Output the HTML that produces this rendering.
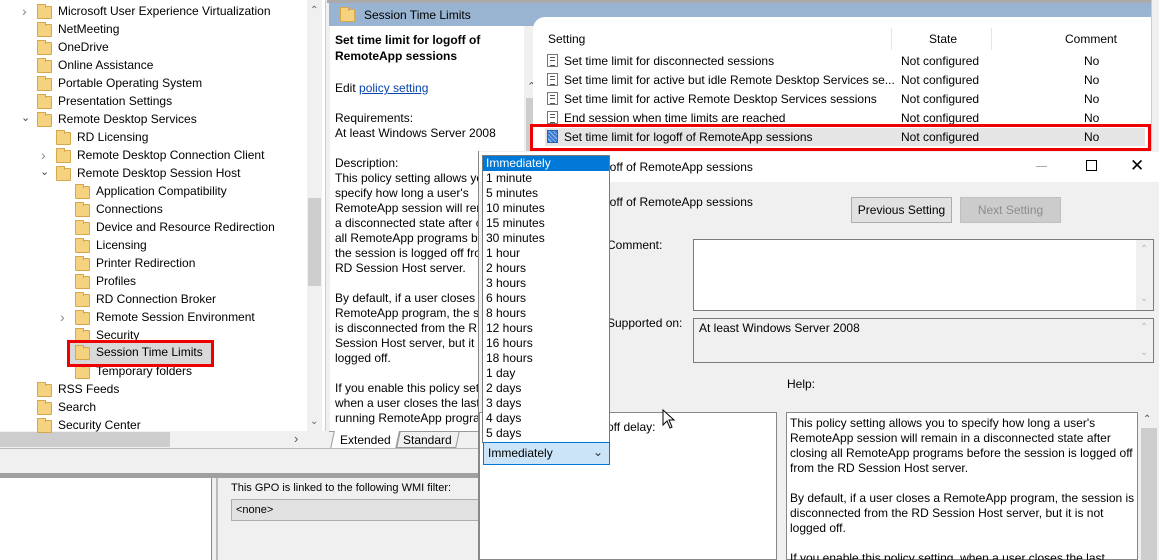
<!DOCTYPE html>
<html><head><meta charset="utf-8"><style>
*{box-sizing:border-box;margin:0;padding:0}
html,body{width:1159px;height:560px;overflow:hidden}
body{position:relative;background:#f0f0f0;font-family:"Liberation Sans",sans-serif;font-size:12px;color:#000}
.a{position:absolute;white-space:nowrap}
.fold{position:absolute;width:15px;height:13px;background:#f5d27f;border:1px solid #d7a84a;border-radius:1px}
.fold:before{content:"";position:absolute;left:-1px;top:-3px;width:7px;height:3px;background:#f5d27f;border:1px solid #d7a84a;border-bottom:none}
.chev{position:absolute;color:#888;font-size:11px}
.ico{position:absolute;width:11px;height:13px;border:1px solid #777;background:#fff}
.ico:after{content:"";position:absolute;left:2px;top:2px;width:5px;height:7px;border-top:1px solid #555;border-bottom:1px solid #555;background:linear-gradient(#fff 2px,#555 2px,#555 3px,#fff 3px)}
.dl div{height:15px;line-height:15px;padding-left:3px}
</style></head><body>
<!-- tree pane -->
<div class="a" style="left:0;top:0;width:326px;height:431px;background:#fff;border-right:1px solid #ccc"></div>
<div class="a" style="left:307px;top:0;width:15px;height:431px;background:#f0f0f0"></div>
<div class="a" style="left:308px;top:198px;width:13px;height:88px;background:#cdcdcd"></div>
<div class="a" style="left:310px;top:5px;color:#666;font-size:10px">&#8963;</div>
<div class="a" style="left:310px;top:416px;color:#666;font-size:10px">&#8964;</div>
<div class="a" style="left:0;top:431px;width:326px;height:17px;background:#f0f0f0"></div>
<div class="a" style="left:0;top:432px;width:170px;height:15px;background:#cdcdcd"></div>
<div class="a" style="left:294px;top:431px;color:#555;font-size:13px">&#8250;</div>

<div id="tree"></div>
<div class="a" style="left:67px;top:340px;width:147px;height:27px;border:3px solid #e00;background:#d9d9d9"></div>
<div class="fold" style="left:75px;top:347px"></div>
<div class="a" style="left:96px;top:345px">Session Time Limits</div>

<!-- middle/header -->
<div class="a" style="left:327px;top:0;width:832px;height:3px;background:#aaa"></div>
<div class="a" style="left:329px;top:3px;width:822px;height:23px;background:#99b4d1"></div>
<div class="fold" style="left:340px;top:9px"></div>
<div class="a" style="left:364px;top:8px;font-size:12px">Session Time Limits</div>
<div class="a" style="left:1151px;top:0;width:8px;height:150px;background:#f0f0f0;border-left:1px solid #ccc"></div>
<div class="a" style="left:330px;top:26px;width:195px;height:405px;background:#fff"></div>
<div class="a" style="left:524px;top:26px;width:16px;height:405px;background:#f0f0f0"></div>
<div class="a" style="left:526px;top:98px;width:12px;height:300px;background:#cdcdcd"></div>
<div class="a" style="left:527px;top:80px;color:#555;font-size:11px">&#8963;</div>
<div class="a" style="left:335px;top:32px;font-weight:bold;line-height:16px">Set time limit for logoff of<br>RemoteApp sessions</div>
<div class="a" style="left:335px;top:81px">Edit <span style="color:#0645ad;text-decoration:underline">policy setting </span></div>
<div class="a" style="left:335px;top:111px;line-height:15px">Requirements:<br>At least Windows Server 2008</div>
<div class="a" style="left:335px;top:156px;line-height:15px">Description:<br>This policy setting allows you to<br>specify how long a user's<br>RemoteApp session will remain in<br>a disconnected state after closing<br>all RemoteApp programs before<br>the session is logged off from the<br>RD Session Host server.<br><br>By default, if a user closes a<br>RemoteApp program, the session<br>is disconnected from the RD<br>Session Host server, but it is not<br>logged off.<br><br>If you enable this policy setting,<br>when a user closes the last<br>running RemoteApp program</div>
<div class="a" style="left:329px;top:431px;width:150px;height:17px;background:#f0f0f0;border-top:1px solid #999"></div>
<div class="a" style="left:332px;top:431px;width:66px;height:18px;background:#fff;border:1px solid #999;border-top:none;transform:skewX(-12deg)"></div>
<div class="a" style="left:340px;top:433px">Extended</div>
<div class="a" style="left:398px;top:431px;width:60px;height:17px;border:1px solid #999;border-top:none;transform:skewX(-12deg)"></div>
<div class="a" style="left:403px;top:433px">Standard</div>

<!-- bottom -->
<div class="a" style="left:0;top:448px;width:478px;height:25px;background:#f0f0f0;border-top:1px solid #bbb"></div>
<div class="a" style="left:0;top:473px;width:478px;height:5px;background:#a0a0a0"></div>
<div class="a" style="left:0;top:478px;width:212px;height:82px;background:#fff;border-right:1px solid #888"></div>
<div class="a" style="left:216px;top:478px;width:2px;height:82px;background:#bbb"></div>
<div class="a" style="left:231px;top:482px;font-size:11px">This GPO is linked to the following WMI filter:</div>
<div class="a" style="left:231px;top:499px;width:250px;height:22px;background:#e1e1e1;border:1px solid #adadad;padding:4px 4px;font-size:11px">&lt;none&gt;</div>

<!-- settings list -->
<div class="a" style="left:533px;top:17px;width:618px;height:133px;background:#fff;border-radius:12px 0 0 0"></div>
<div class="a" style="left:548px;top:32px">Setting</div>
<div class="a" style="left:891px;top:28px;width:1px;height:22px;background:#e5e5e5"></div>
<div class="a" style="left:991px;top:28px;width:1px;height:22px;background:#e5e5e5"></div>
<div class="a" style="left:929px;top:32px">State</div>
<div class="a" style="left:1065px;top:32px">Comment</div>
<div id="rows"></div>
<div class="a" style="left:530px;top:124px;width:621px;height:27px;border:3px solid #e00"></div>

<!-- dialog -->
<div class="a" style="left:478px;top:151px;width:681px;height:409px;background:#f0f0f0;border-left:1px solid #888"></div>
<div class="a" style="left:479px;top:152px;width:680px;height:30px;background:#fff"></div>
<div class="a" style="left:603px;top:160px">goff of RemoteApp sessions</div>
<div class="a" style="left:1036px;top:166px;width:11px;height:1px;background:#aaa"></div>
<div class="a" style="left:1086px;top:160px;width:11px;height:11px;border:1px solid #000"></div>
<div class="a" style="left:1130px;top:156px;font-size:17px;font-weight:100">&#10005;</div>
<div class="a" style="left:603px;top:195px">goff of RemoteApp sessions</div>
<div class="a" style="left:851px;top:197px;width:101px;height:26px;background:#e1e1e1;border:1px solid #adadad;text-align:center;line-height:24px">Previous Setting</div>
<div class="a" style="left:960px;top:197px;width:101px;height:26px;background:#ccc;border:1px solid #bfbfbf;text-align:center;line-height:24px;color:#8d8d8d">Next Setting</div>
<div class="a" style="left:607px;top:238px">Comment:</div>
<div class="a" style="left:693px;top:239px;width:461px;height:72px;background:#fff;border:1px solid #7a7a7a"></div>
<div class="a" style="left:1136px;top:240px;width:17px;height:70px;background:#f0f0f0"></div>
<div class="a" style="left:1140px;top:244px;color:#bbb;font-size:10px">&#8963;</div>
<div class="a" style="left:1140px;top:293px;color:#bbb;font-size:10px">&#8964;</div>
<div class="a" style="left:607px;top:316px">Supported on:</div>
<div class="a" style="left:693px;top:318px;width:461px;height:45px;background:#f0f0f0;border:1px solid #7a7a7a"></div>
<div class="a" style="left:699px;top:321px">At least Windows Server 2008</div>
<div class="a" style="left:1140px;top:322px;color:#bbb;font-size:10px">&#8963;</div>
<div class="a" style="left:1140px;top:347px;color:#bbb;font-size:10px">&#8964;</div>
<div class="a" style="left:787px;top:377px">Help:</div>
<div class="a" style="left:479px;top:412px;width:298px;height:148px;background:#fff;border:1px solid #888"></div>
<div class="a" style="left:607px;top:420px">off delay:</div>
<div class="a" style="left:786px;top:412px;width:352px;height:148px;background:#fff;border:1px solid #888"></div>
<div class="a" style="left:790px;top:416px;line-height:15px">This policy setting allows you to specify how long a user's<br>RemoteApp session will remain in a disconnected state after<br>closing all RemoteApp programs before the session is logged off<br>from the RD Session Host server.<br><br>By default, if a user closes a RemoteApp program, the session is<br>disconnected from the RD Session Host server, but it is not<br>logged off.<br><br>If you enable this policy setting, when a user closes the last</div>
<div class="a" style="left:1139px;top:412px;width:20px;height:148px;background:#f0f0f0"></div>
<div class="a" style="left:1141px;top:428px;width:16px;height:132px;background:#cdcdcd"></div>
<div class="a" style="left:1143px;top:414px;color:#555;font-size:10px">&#8963;</div>
<svg class="a" style="left:662px;top:409px" width="14" height="20"><path d="M1 1 L1 16 L5 12 L8 19 L10 18 L7 11 L12 11 Z" fill="#fff" stroke="#000"/></svg>

<!-- dropdown -->
<div class="a dl" style="left:482px;top:155px;width:128px;height:288px;background:#fff;border:1px solid #7a7a7a">
<div style="background:#0078d7;color:#fff">Immediately</div><div>1 minute</div><div>5 minutes</div><div>10 minutes</div><div>15 minutes</div><div>30 minutes</div><div>1 hour</div><div>2 hours</div><div>3 hours</div><div>6 hours</div><div>8 hours</div><div>12 hours</div><div>16 hours</div><div>18 hours</div><div>1 day</div><div>2 days</div><div>3 days</div><div>4 days</div><div>5 days</div></div>
<div class="a" style="left:483px;top:442px;width:127px;height:23px;background:#cce4f7;border:1px solid #0078d7;padding:3px 0 0 4px">Immediately<span style="position:absolute;right:6px;top:2px;color:#333">&#8964;</span></div>

<script>
var t=[[1,'Microsoft User Experience Virtualization','>'],[1,'NetMeeting'],[1,'OneDrive'],[1,'Online Assistance'],[1,'Portable Operating System'],[1,'Presentation Settings'],[1,'Remote Desktop Services','v'],[2,'RD Licensing'],[2,'Remote Desktop Connection Client','>'],[2,'Remote Desktop Session Host','v'],[3,'Application Compatibility'],[3,'Connections'],[3,'Device and Resource Redirection'],[3,'Licensing'],[3,'Printer Redirection'],[3,'Profiles'],[3,'RD Connection Broker'],[3,'Remote Session Environment','>'],[3,'Security'],[3,''],[3,'Temporary folders'],[1,'RSS Feeds'],[1,'Search'],[1,'Security Center']];
var h='';t.forEach(function(r,i){var y=4+i*18;if(!r[1])return;var fx=[0,37,56,75][r[0]],tx=[0,58,77,96][r[0]];
h+='<div class="fold" style="left:'+fx+'px;top:'+(y+2)+'px"></div><div class="a" style="left:'+tx+'px;top:'+y+'px">'+r[1]+'</div>';
if(r[2]=='>')h+='<div class="chev" style="left:'+(fx-15)+'px;top:'+(y-1)+'px;font-size:14px">&#8250;</div>';
if(r[2]=='v')h+='<div class="chev" style="left:'+(fx-16)+'px;top:'+(y-1)+'px;color:#444">&#8964;</div>';});
document.getElementById('tree').innerHTML=h;
var s=['Set time limit for disconnected sessions','Set time limit for active but idle Remote Desktop Services se...','Set time limit for active Remote Desktop Services sessions','End session when time limits are reached','Set time limit for logoff of RemoteApp sessions'];
h='';s.forEach(function(x,i){var y=54+i*19;if(i==4)h+='<div class="a" style="left:545px;top:'+(y-2)+'px;width:600px;height:18px;background:#e5e5e5"></div>';
h+=(i==4?'<div class="a" style="left:547px;top:'+(y)+'px;width:11px;height:13px;background:repeating-linear-gradient(45deg,#3a7bd5 0 2px,#9cc3f0 2px 3px);border:1px solid #2b62b0"></div>':'<div class="ico" style="left:547px;top:'+y+'px"></div>')+
'<div class="a" style="left:564px;top:'+y+'px">'+x+'</div><div class="a" style="left:901px;top:'+y+'px">Not configured</div><div class="a" style="left:1084px;top:'+y+'px">No</div>';});
document.getElementById('rows').innerHTML=h;
</script>
</body></html>
